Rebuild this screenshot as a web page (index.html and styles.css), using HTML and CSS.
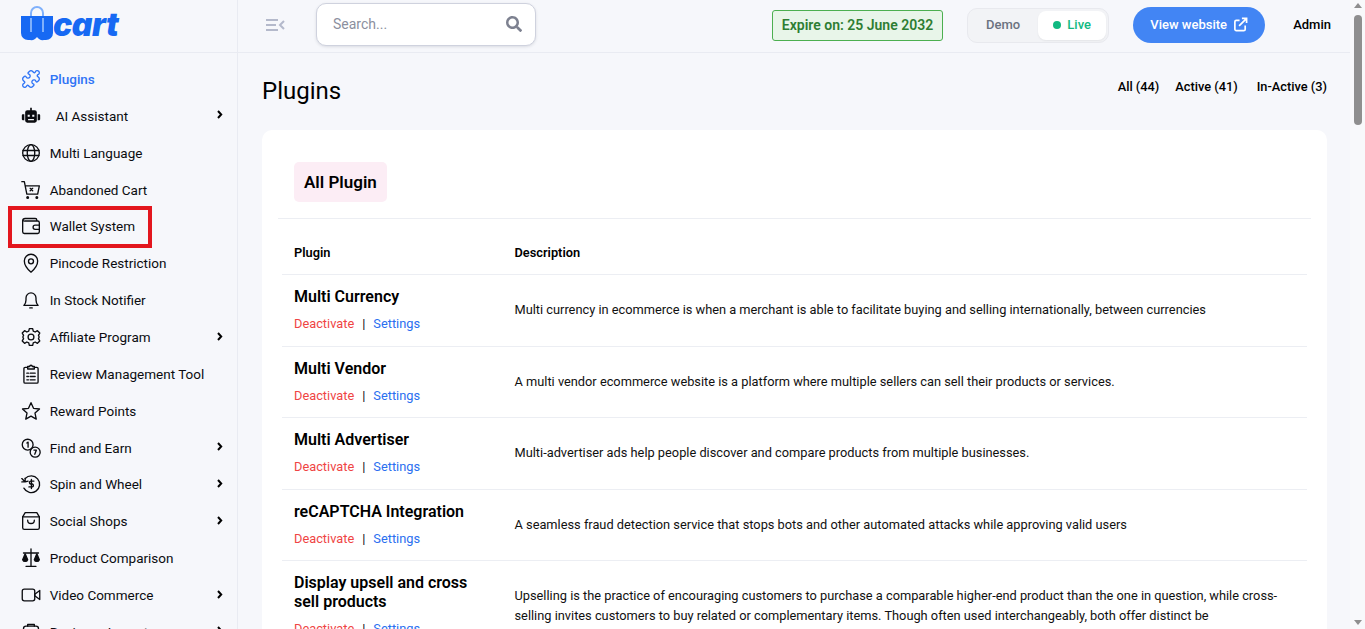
FILE: index.html
```html
<!DOCTYPE html>
<html lang="en">
<head>
    <meta charset="UTF-8">
    <meta name="viewport" content="width=device-width, initial-scale=1.0">
    <title>Plugins</title>
    <link rel="stylesheet" href="styles.css">
</head>
<body>
    <div class="app">
        <!-- Sidebar -->
        <aside class="sidebar">
            <div class="logo">
                <svg class="logo-bag" viewBox="0 0 32 36" width="32" height="36">
                    <path d="M10 12V7a6 6 0 0 1 12 0v5" fill="none" stroke="#7fb0fb" stroke-width="2"/>
                    <path d="M0 10h32v17a7 7 0 0 1-7 7h-2a7 7 0 0 1-7-3 7 7 0 0 1-7 3H7a7 7 0 0 1-7-7z" fill="#1769f3"/>
                    <path d="M10 12v14M22 12v14" fill="none" stroke="#7fb0fb" stroke-width="2"/>
                </svg>
                <span class="logo-text">cart</span>
            </div>
            <nav class="nav">
                <a class="nav-item active">
                    <svg class="nav-icon" viewBox="0 0 24 24"><path d="M19.439 7.85c-.049.322.059.648.289.878l1.568 1.568c.47.47.706 1.087.706 1.704s-.235 1.233-.706 1.704l-1.611 1.611a.98.98 0 0 1-.837.276c-.47-.07-.802-.48-.968-.925a2.501 2.501 0 1 0-3.214 3.214c.446.166.855.497.925.968a.979.979 0 0 1-.276.837l-1.61 1.61a2.404 2.404 0 0 1-1.705.707 2.402 2.402 0 0 1-1.704-.706l-1.568-1.568a1.026 1.026 0 0 0-.877-.29c-.493.074-.84.504-1.02.968a2.5 2.5 0 1 1-3.237-3.237c.464-.18.894-.527.967-1.02a1.026 1.026 0 0 0-.289-.877l-1.568-1.568A2.402 2.402 0 0 1 1.998 12c0-.617.236-1.234.706-1.704L4.23 8.77c.24-.24.581-.353.917-.303.515.077.877.528 1.073 1.01a2.5 2.5 0 1 0 3.259-3.259c-.482-.196-.933-.558-1.01-1.073-.05-.336.062-.676.303-.917l1.525-1.525A2.402 2.402 0 0 1 12 1.998c.617 0 1.234.236 1.704.706l1.568 1.568c.23.23.556.338.877.29.493-.074.84-.504 1.02-.968a2.5 2.5 0 1 1 3.237 3.237c-.464.18-.894.527-.967 1.02Z"/></svg>
                    <span>Plugins</span>
                </a>
                <a class="nav-item">
                    <svg class="nav-icon solid" viewBox="0 0 24 24"><path d="M11 2h2v3h3.5A2.5 2.5 0 0 1 19 7.5v10a2.5 2.5 0 0 1-2.5 2.5h-9A2.5 2.5 0 0 1 5 17.500v-10A2.5 2.5 0 0 1 7.5 5H11zM2 10h2v7H2a1 1 0 0 1-1-1v-5a1 1 0 0 1 1-1zm18 0h2a1 1 0 0 1 1 1v5a1 1 0 0 1-1 1h-2z"/><path class="bot-face" d="M8 10.500h2.500V13H8zM13.500 10.500H16V13h-2.500zM8.500 15.500h7V17h-7z"/></svg>
                    <span class="nav-indent">AI Assistant</span>
                    <svg class="chevron" viewBox="0 0 6 9"><path d="M1 1l3.2 3.500L1 8"/></svg>
                </a>
                <a class="nav-item">
                    <svg class="nav-icon" viewBox="0 0 24 24"><circle cx="12" cy="12" r="10"/><ellipse cx="12" cy="12" rx="4.5" ry="10"/><path d="M2.5 9h19M2.5 15h19"/></svg>
                    <span>Multi Language</span>
                </a>
                <a class="nav-item">
                    <svg class="nav-icon" viewBox="0 0 24 24"><path d="M1 2h3l3 15h13l2-10H5"/><path d="M11 10l3 3m0-3l-3 3"/><circle cx="8" cy="21" r="1" class="dot"/><circle cx="19" cy="21" r="1" class="dot"/></svg>
                    <span>Abandoned Cart</span>
                </a>
                <a class="nav-item marked">
                    <svg class="nav-icon" viewBox="0 0 24 24"><path d="M19 6V5a2 2 0 0 0-2-2H5a3 3 0 0 0-3 3v13a2 2 0 0 0 2 2h16a2 2 0 0 0 2-2V8a2 2 0 0 0-2-2H5a3 3 0 0 1-3-1"/><path d="M22 11h-5a2.5 2.5 0 0 0 0 5h5"/></svg>
                    <span>Wallet System</span>
                </a>
                <a class="nav-item">
                    <svg class="nav-icon" viewBox="0 0 24 24"><path d="M12 23s-8-7-8-13.500a8 8 0 0 1 16 0C20 16 12 23 12 23z"/><circle cx="12" cy="10" r="3"/></svg>
                    <span>Pincode Restriction</span>
                </a>
                <a class="nav-item">
                    <svg class="nav-icon" viewBox="0 0 24 24"><path d="M3.5 18.500c1.500-1.500 2.500-3 2.500-6.500V9.500a6 6 0 0 1 12 0V12c0 3.500 1 5 2.500 6.500z"/><path d="M10.500 21.500h3"/></svg>
                    <span>In Stock Notifier</span>
                </a>
                <a class="nav-item">
                    <svg class="nav-icon" viewBox="0 0 24 24"><circle cx="12" cy="12" r="3.5"/><path d="M10 2h4l.7 3 2.300 1 2.700-1.600 2.800 2.900L20.900 10l.9 2-.9 2 1.600 2.700-2.800 2.900L17 18l-2.300 1-.7 3h-4l-.7-3L7 18l-2.700 1.600-2.800-2.900L3.100 14l-.9-2 .9-2-1.600-2.700 2.800-2.900L7 6l2.300-1z"/></svg>
                    <span>Affiliate Program</span>
                    <svg class="chevron" viewBox="0 0 6 9"><path d="M1 1l3.2 3.500L1 8"/></svg>
                </a>
                <a class="nav-item">
                    <svg class="nav-icon" viewBox="0 0 24 24"><path d="M8 4H5a1.500 1.500 0 0 0-1.500 1.500v16A1.500 1.500 0 0 0 5 23h14a1.500 1.500 0 0 0 1.500-1.500v-16A1.500 1.500 0 0 0 19 4h-3"/><path d="M8 3h2.500a1.500 1.500 0 0 1 3 0H16v3H8z"/><path d="M7 11h2M11 11h6M7 15h2M11 15h6M7 19h2M11 19h6"/></svg>
                    <span>Review Management Tool</span>
                </a>
                <a class="nav-item">
                    <svg class="nav-icon" viewBox="0 0 24 24"><path d="m12 2 3 6.800 7.200.8-5.400 4.900 1.500 7.200L12 18.100l-6.300 3.600 1.500-7.200L1.800 9.600 9 8.800z"/></svg>
                    <span>Reward Points</span>
                </a>
                <a class="nav-item">
                    <svg class="nav-icon" viewBox="0 0 24 24"><circle cx="8" cy="8" r="6.5"/><circle cx="17" cy="17" r="6"/><path d="M7 6l1.500-1v6M15.500 14.500h3l-2 5"/></svg>
                    <span>Find and Earn</span>
                    <svg class="chevron" viewBox="0 0 6 9"><path d="M1 1l3.2 3.500L1 8"/></svg>
                </a>
                <a class="nav-item">
                    <svg class="nav-icon" viewBox="0 0 24 24"><path d="M5 5.500A10 10 0 1 1 3.500 17"/><path d="M1 5.500 5 9.500l3.500-1M1 9.500h4V5"/><path d="M15.500 8.500h-4a1.800 1.800 0 0 0 0 3.500h2a1.800 1.800 0 0 1 0 3.500h-4M12.500 6.500v11"/></svg>
                    <span>Spin and Wheel</span>
                    <svg class="chevron" viewBox="0 0 6 9"><path d="M1 1l3.2 3.500L1 8"/></svg>
                </a>
                <a class="nav-item">
                    <svg class="nav-icon" viewBox="0 0 24 24"><path d="M5 2h14l3 5v13a2 2 0 0 1-2 2H4a2 2 0 0 1-2-2V7z"/><path d="M2 7h20M8 11a4 4 0 0 0 8 0"/></svg>
                    <span>Social Shops</span>
                    <svg class="chevron" viewBox="0 0 6 9"><path d="M1 1l3.2 3.500L1 8"/></svg>
                </a>
                <a class="nav-item">
                    <svg class="nav-icon" viewBox="0 0 24 24"><path d="M12 1v20M6 22h12M3 6h18"/><path d="M5 7l-3 7a3.200 3.200 0 0 0 6 0zM19 7l-3 7a3.200 3.200 0 0 0 6 0z" class="filled"/></svg>
                    <span>Product Comparison</span>
                </a>
                <a class="nav-item">
                    <svg class="nav-icon" viewBox="0 0 24 24"><rect x="1.500" y="5" width="15" height="14" rx="2.500"/><path d="m16.500 11 6-4.500v11l-6-4.500z"/></svg>
                    <span>Video Commerce</span>
                    <svg class="chevron" viewBox="0 0 6 9"><path d="M1 1l3.2 3.500L1 8"/></svg>
                </a>
                <a class="nav-item">
                    <svg class="nav-icon" viewBox="0 0 24 24"><path d="M8 5V3h8v2"/><rect x="3" y="5" width="18" height="16" rx="3"/></svg>
                    <span>Business Layout</span>
                    <svg class="chevron" viewBox="0 0 6 9"><path d="M1 1l3.2 3.500L1 8"/></svg>
                </a>
            </nav>
        </aside>

        <div class="content">
            <!-- Header -->
            <header class="topbar">
                <svg class="menu-toggle" viewBox="0 0 20 14" width="20" height="14"><path d="M1 2h12M1 7h10M1 12h12M19 3l-4 4 4 4"/></svg>
                <div class="search">
                    <span class="search-text">Search...</span>
                    <svg viewBox="0 0 512 512" width="16" height="16"><path d="M505 442.700 405.300 343c-4.500-4.500-10.600-7-17-7H372c27.600-35.300 44-79.700 44-128C416 93.100 322.900 0 208 0S0 93.100 0 208s93.100 208 208 208c48.300 0 92.700-16.400 128-44v16.300c0 6.400 2.500 12.500 7 17l99.700 99.700c9.400 9.400 24.600 9.400 33.900 0l28.300-28.300c9.400-9.400 9.400-24.600.1-34zM208 336c-70.700 0-128-57.200-128-128 0-70.700 57.200-128 128-128 70.700 0 128 57.200 128 128 0 70.700-57.200 128-128 128z"/></svg>
                </div>
                <div class="topbar-right">
                    <div class="expire">Expire on: 25 June 2032</div>
                    <div class="mode-switch">
                        <span class="mode">Demo</span>
                        <span class="mode mode-live"><i class="live-dot"></i>Live</span>
                    </div>
                    <a class="view-btn">View website
                        <svg viewBox="0 0 16 16" width="15" height="15"><path d="M13 9v4a1.500 1.500 0 0 1-1.500 1.500h-8A1.500 1.500 0 0 1 2 13V5a1.500 1.500 0 0 1 1.500-1.500H7"/><path d="M6.500 9.500 14 2M9.500 1.500H14.500V6.500"/></svg>
                    </a>
                    <span class="admin">Admin</span>
                </div>
            </header>

            <!-- Main -->
            <main class="main">
                <div class="page-head">
                    <h1>Plugins</h1>
                    <div class="filters">
                        <a>All (44)</a>
                        <a>Active (41)</a>
                        <a>In-Active (3)</a>
                    </div>
                </div>
                <section class="card">
                    <div class="card-head">
                        <h2 class="card-title">All Plugin</h2>
                    </div>
                    <table class="plugin-table">
                        <thead>
                            <tr><th class="col-name">Plugin</th><th>Description</th></tr>
                        </thead>
                        <tbody>
                            <tr>
                                <td><div class="plugin-name">Multi Currency</div><div class="plugin-links"><a class="off">Deactivate</a><span>|</span><a class="set">Settings</a></div></td>
                                <td>Multi currency in ecommerce is when a merchant is able to facilitate buying and selling internationally, between currencies</td>
                            </tr>
                            <tr>
                                <td><div class="plugin-name">Multi Vendor</div><div class="plugin-links"><a class="off">Deactivate</a><span>|</span><a class="set">Settings</a></div></td>
                                <td>A multi vendor ecommerce website is a platform where multiple sellers can sell their products or services.</td>
                            </tr>
                            <tr>
                                <td><div class="plugin-name">Multi Advertiser</div><div class="plugin-links"><a class="off">Deactivate</a><span>|</span><a class="set">Settings</a></div></td>
                                <td>Multi-advertiser ads help people discover and compare products from multiple businesses.</td>
                            </tr>
                            <tr>
                                <td><div class="plugin-name">reCAPTCHA Integration</div><div class="plugin-links"><a class="off">Deactivate</a><span>|</span><a class="set">Settings</a></div></td>
                                <td>A seamless fraud detection service that stops bots and other automated attacks while approving valid users</td>
                            </tr>
                            <tr>
                                <td><div class="plugin-name">Display upsell and cross sell products</div><div class="plugin-links"><a class="off">Deactivate</a><span>|</span><a class="set">Settings</a></div></td>
                                <td>Upselling is the practice of encouraging customers to purchase a comparable higher-end product than the one in question, while cross-selling invites customers to buy related or complementary items. Though often used interchangeably, both offer distinct be</td>
                            </tr>
                        </tbody>
                    </table>
                </section>
            </main>
        </div>

        <!-- Scrollbar -->
        <div class="scrollbar">
            <i class="scroll-arrow"></i>
            <i class="scroll-thumb"></i>
            <i class="scroll-arrow down"></i>
        </div>
    </div>
</body>
</html>
```

FILE: styles.css
```css
/* Base */
html, body {
    height: 100%;
    margin: 0;
    overflow: hidden;
}

body {
    font-family: 'Roboto', 'Liberation Sans', sans-serif;
    font-size: 12.8px;
    color: #000;
    background: #f6f7fb;
}

.app {
    display: flex;
    height: 100vh;
    overflow: hidden;
}

/* Sidebar */
.sidebar {
    flex: 0 0 238px;
    box-sizing: border-box;
    border-right: 1px solid #e9ebf2;
    overflow: hidden;
}

.logo {
    display: flex;
    align-items: flex-start;
    height: 52px;
    padding-left: 21px;
    border-bottom: 1px solid #e9ebf2;
}

.logo-bag {
    margin-top: 6px;
    flex: none;
}

.logo-text {
    font-family: 'Inter', sans-serif;
    font-size: 32px;
    font-weight: 900;
    font-style: italic;
    line-height: 38px;
    letter-spacing: -0.5px;
    color: #1769f3;
    margin: 6px 0 0 0;
}

.nav {
    padding-top: 7.6px;
}

.nav-item {
    display: flex;
    align-items: center;
    position: relative;
    height: 36.87px;
    padding: 0 14px 0 21px;
    font-size: 13.5px;
    color: #0b0c10;
}

.nav-item > span {
    flex: 1;
    margin-left: 8.7px;
}

.nav-item > .nav-indent {
    margin-left: 14.7px;
}

.nav-item.active {
    color: #2f74f6;
    font-weight: 500;
}

.nav-icon {
    flex: none;
    width: 20px;
    height: 20px;
    fill: none;
    stroke: currentColor;
    stroke-width: 1.6;
    stroke-linecap: round;
    stroke-linejoin: round;
}

.nav-icon.solid {
    fill: currentColor;
    stroke: none;
}

.nav-icon .bot-face {
    fill: #f6f7fb;
}

.nav-icon .dot,
.nav-icon .filled {
    fill: currentColor;
}

.chevron {
    flex: none;
    width: 6px;
    height: 9px;
    margin-top: -2px;
    fill: none;
    stroke: #000;
    stroke-width: 2;
}

/* Red annotation box round a menu item */
.marked::after {
    content: "";
    position: absolute;
    left: 8px;
    top: -2.5px;
    width: 144px;
    height: 42.5px;
    box-sizing: border-box;
    border: 4px solid #e3161e;
}

/* Header */
.content {
    flex: 1;
    min-width: 0;
    display: flex;
    flex-direction: column;
}

.topbar {
    display: flex;
    align-items: center;
    flex: none;
    height: 52px;
    border-bottom: 1px solid #e9ebf2;
    padding: 0 19px 0 27px;
}

.menu-toggle {
    flex: none;
    fill: none;
    stroke: #b4b9cb;
    stroke-width: 2;
    margin: -2px 31px 0 0;
}

.search {
    display: flex;
    align-items: center;
    justify-content: space-between;
    width: 220px;
    height: 43px;
    box-sizing: border-box;
    padding: 0 13px 2px 16px;
    background: #fff;
    border: 1px solid #cfd2de;
    border-radius: 10px;
    box-shadow: 0 1px 3px rgba(60, 64, 90, 0.15);
    margin-top: -3px;
}

.search-text {
    font-size: 14px;
    color: #8b8f9e;
}

.search svg {
    fill: #7d8190;
}

.topbar-right {
    display: flex;
    align-items: center;
    margin: -2px 0 0 auto;
}

.expire {
    box-sizing: border-box;
    height: 31px;
    line-height: 29px;
    padding: 0 9px;
    font-size: 14px;
    font-weight: 600;
    color: #2e7d32;
    background: #e8f5e9;
    border: 1px solid #4caf50;
    border-radius: 3px;
    margin-right: 24px;
}

.mode-switch {
    display: flex;
    align-items: center;
    box-sizing: border-box;
    width: 142px;
    height: 35px;
    padding: 0 2px 0 0;
    background: #f2f3f6;
    border: 1px solid #e8e9ee;
    border-radius: 10px;
    margin-right: 24px;
}

.mode {
    font-size: 13px;
    font-weight: 500;
    color: #6b7280;
    flex: 1;
    text-align: center;
    padding-bottom: 1px;
}

.mode-live {
    flex: 0 0 68px;
    height: 29px;
    box-sizing: border-box;
    padding-bottom: 0;
    line-height: 27px;
    background: #fff;
    border-radius: 8px;
    color: #10b981;
    box-shadow: 0 1px 2px rgba(0, 0, 0, 0.06);
}

.live-dot {
    display: inline-block;
    width: 8px;
    height: 8px;
    margin-right: 6px;
    border-radius: 50%;
    background: #10b981;
}

.view-btn {
    display: flex;
    align-items: center;
    justify-content: center;
    gap: 6px;
    width: 132px;
    height: 36px;
    box-sizing: border-box;
    padding-bottom: 2px;
    font-size: 13px;
    font-weight: 500;
    color: #fff;
    background: #4285f4;
    border-radius: 18px;
    margin-right: 28px;
}

.view-btn svg {
    fill: none;
    stroke: #fff;
    stroke-width: 1.8;
}

.admin {
    font-size: 13px;
    font-weight: 500;
    margin-top: -2px;
}

/* Main */
.main {
    flex: 1;
    padding: 0 23px 0 24px;
    overflow: hidden;
}

.page-head {
    display: flex;
    justify-content: space-between;
    height: 77px;
}

.page-head h1 {
    margin: 21px 0 0;
    font-size: 24px;
    font-weight: 400;
    line-height: 34px;
}

.filters {
    display: flex;
    gap: 16px;
    margin-top: 26px;
    font-size: 12.8px;
    font-weight: 500;
    line-height: 16px;
}

.filters a:last-child {
    margin-left: 3px;
}

.card {
    background: #fff;
    border-radius: 10px;
    padding: 32px 16px 0;
}

.card-head {
    padding-bottom: 16px;
    border-bottom: 1px solid #eceef3;
}

.card-title {
    display: inline-block;
    margin: 0 0 0 16px;
    padding: 0 10px;
    height: 40px;
    line-height: 40px;
    font-size: 17px;
    font-weight: 600;
    background: #fcedf5;
    border-radius: 5px;
    vertical-align: top;
}

.plugin-table {
    width: calc(100% - 8px);
    margin: 0 4px;
    border-collapse: collapse;
    table-layout: fixed;
}

.plugin-table th {
    height: 55px;
    box-sizing: border-box;
    padding: 12px 12px 0;
    text-align: left;
    font-size: 12.8px;
    font-weight: 600;
    border-bottom: 1px solid #eceef3;
}

.plugin-table .col-name {
    width: 220.5px;
}

.plugin-table td {
    height: 71.4px;
    box-sizing: border-box;
    padding: 11px 12px;
    font-size: 12.8px;
    line-height: 20px;
    color: #111;
    border-bottom: 1px solid #eceef3;
    vertical-align: middle;
}

.plugin-table tbody tr:first-child td {
    height: 72.4px;
}

.plugin-name {
    font-size: 16px;
    font-weight: 600;
    line-height: 19px;
    color: #000;
    padding-top: 1px;
    margin-bottom: 10px;
}

.plugin-links {
    display: flex;
    gap: 8px;
    font-size: 12.8px;
    line-height: 16px;
    margin-bottom: 2px;
}

.off {
    color: #ef4444;
}

.set {
    color: #2a6ff0;
}

/* Scrollbar */
.scrollbar {
    flex: 0 0 15px;
    display: flex;
    flex-direction: column;
    background: #f8f9fb;
}

.scroll-arrow {
    display: block;
    width: 0;
    margin: 3px auto 0;
    border: 4px solid transparent;
    border-top: 0;
    border-bottom: 5px solid #8f8f8f;
}

.scroll-arrow.down {
    margin: auto auto 4px;
    border-bottom: 0;
    border-top: 5px solid #8f8f8f;
}

.scroll-thumb {
    display: block;
    width: 8px;
    height: 110px;
    margin: 7px auto 0;
    border-radius: 4px;
    background: #8f8f8f;
}
```
